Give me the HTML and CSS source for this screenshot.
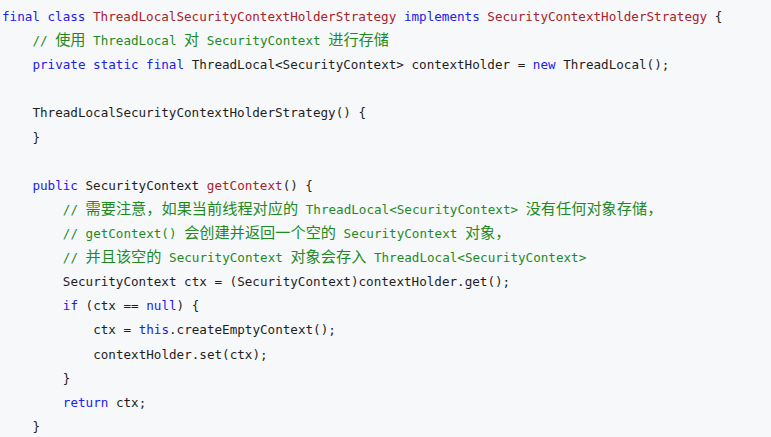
FILE: index.html
```html
<!DOCTYPE html>
<html>
<head>
<meta charset="utf-8">
<link rel="stylesheet" href="styles.css">
</head>
<body>
<div class="code">
  <div class="ln"><span class="kw">final class</span> <span class="cn">ThreadLocalSecurityContextHolderStrategy</span> <span class="kw">implements</span> <span class="cn">SecurityContextHolderStrategy</span> {</div>
  <div class="ln i1 cm">// <span class="zh">使用</span> ThreadLocal <span class="zh">对</span> SecurityContext <span class="zh">进行存储</span></div>
  <div class="ln i1"><span class="kw">private static final</span> ThreadLocal&lt;SecurityContext&gt; contextHolder = <span class="kw">new</span> ThreadLocal();</div>
  <div class="ln"></div>
  <div class="ln i1">ThreadLocalSecurityContextHolderStrategy() {</div>
  <div class="ln i1">}</div>
  <div class="ln"></div>
  <div class="ln i1"><span class="kw">public</span> SecurityContext <span class="cn">getContext</span>() {</div>
  <div class="ln i2 cm">// <span class="zh">需要注意，如果当前线程对应的</span> ThreadLocal&lt;SecurityContext&gt; <span class="zh">没有任何对象存储，</span></div>
  <div class="ln i2 cm">// getContext() <span class="zh">会创建并返回一个空的</span> SecurityContext <span class="zh">对象，</span></div>
  <div class="ln i2 cm">// <span class="zh">并且该空的</span> SecurityContext <span class="zh">对象会存入</span> ThreadLocal&lt;SecurityContext&gt;</div>
  <div class="ln i2">SecurityContext ctx = (SecurityContext)contextHolder.get();</div>
  <div class="ln i2"><span class="kw">if</span> (ctx == <span class="kw">null</span>) {</div>
  <div class="ln i3">ctx = <span class="kw">this</span>.createEmptyContext();</div>
  <div class="ln i3">contextHolder.set(ctx);</div>
  <div class="ln i2">}</div>
  <div class="ln i2"><span class="kw">return</span> ctx;</div>
  <div class="ln i1">}</div>
</div>
</body>
</html>
```

FILE: styles.css
```css
html, body {
  margin: 0;
  padding: 0;
  background: #f6f8fa;
}

.code {
  padding: 5px 0 0 2px;
  font-family: "DejaVu Sans Mono", monospace;
  font-size: 12.6px;
  line-height: 24.12px;
  color: #1e1e1e;
}

.ln {
  height: 24.12px;
  white-space: pre;
}

.i1 {
  padding-left: 30.4px;
}

.i2 {
  padding-left: 60.8px;
}

.i3 {
  padding-left: 91.2px;
}

.kw {
  color: #2020e8;
}

.cn {
  color: #a8222a;
}

.cm {
  color: #1f8a1f;
}

.zh {
  font-family: "Noto Sans CJK SC", sans-serif;
  font-size: 15.2px;
  line-height: 1;
}
```
